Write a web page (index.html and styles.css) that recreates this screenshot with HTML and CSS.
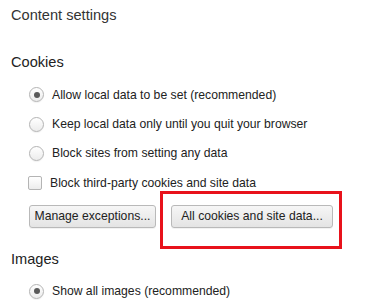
FILE: index.html
```html
<!DOCTYPE html>
<html>
<head>
<meta charset="utf-8">
<link rel="stylesheet" href="styles.css">
</head>
<body>
<div class="page">
  <h1 class="title">Content settings</h1>
  <section class="section">
    <h2 class="heading">Cookies</h2>
    <div class="options">
      <div class="option"><span class="radio checked"></span><span>Allow local data to be set (recommended)</span></div>
      <div class="option"><span class="radio"></span><span>Keep local data only until you quit your browser</span></div>
      <div class="option"><span class="radio"></span><span>Block sites from setting any data</span></div>
      <div class="option opt-check"><span class="check"></span><span>Block third-party cookies and site data</span></div>
      <div class="buttons">
        <button class="btn btn-manage">Manage exceptions...</button>
        <button class="btn btn-all">All cookies and site data...</button>
        <div class="highlight"></div>
      </div>
    </div>
  </section>
  <section class="section">
    <h2 class="heading heading-images">Images</h2>
    <div class="options options-images">
      <div class="option"><span class="radio checked"></span><span>Show all images (recommended)</span></div>
    </div>
  </section>
</div>
</body>
</html>
```
FILE: styles.css
```css
html, body {
  margin: 0;
  padding: 0;
  background: #fff;
}
body {
  font-family: "Liberation Sans", Arial, sans-serif;
  color: #222;
  width: 378px;
  height: 300px;
  overflow: hidden;
}
.page {
  padding: 5px 0 0 11px;
}
.title {
  font-size: 14.6px;
  font-weight: normal;
  line-height: 20px;
  margin: 0;
  color: #333;
}
.heading {
  font-size: 14.6px;
  font-weight: normal;
  line-height: 20px;
  margin: 27px 0 0 0;
  color: #222;
}
.heading-images {
  margin-top: 21px;
}
.options {
  padding-left: 18px;
  margin-top: 8px;
}
.options-images {
  margin-top: 8px;
}
.option {
  display: flex;
  align-items: center;
  height: 29.4px;
  font-size: 12.2px;
  color: #222;
}
.radio {
  width: 13px;
  height: 13px;
  border: 1px solid #b4b4b4;
  border-radius: 50%;
  background: linear-gradient(#ffffff, #ececec);
  box-sizing: content-box;
  margin-right: 8px;
  flex: none;
  position: relative;
  box-shadow: 0 1px 1px rgba(0,0,0,0.06);
}
.radio.checked::after {
  content: "";
  position: absolute;
  left: 3.5px;
  top: 3.5px;
  width: 6px;
  height: 6px;
  border-radius: 50%;
  background: #5a5a5a;
}
.check {
  width: 12px;
  height: 12px;
  border: 1px solid #b4b4b4;
  border-radius: 2px;
  background: linear-gradient(#ffffff, #ececec);
  margin-right: 8px;
  margin-left: -1px;
  flex: none;
}
.buttons {
  position: relative;
  display: flex;
  gap: 15px;
  margin-top: 7px;
}
.btn {
  font-family: "Liberation Sans", Arial, sans-serif;
  font-size: 12.2px;
  color: #222;
  height: 23px;
  padding: 0;
  border: 1px solid #b9b9b9;
  border-radius: 3px;
  background: linear-gradient(#f6f6f6, #e4e4e4);
  box-shadow: 0 1px 0 rgba(0,0,0,0.05);
}
.btn-manage {
  width: 127px;
}
.btn-all {
  width: 162px;
}
.highlight {
  position: absolute;
  left: 131px;
  top: -14px;
  width: 176px;
  height: 52px;
  border: 3px solid #e8121b;
}
```
